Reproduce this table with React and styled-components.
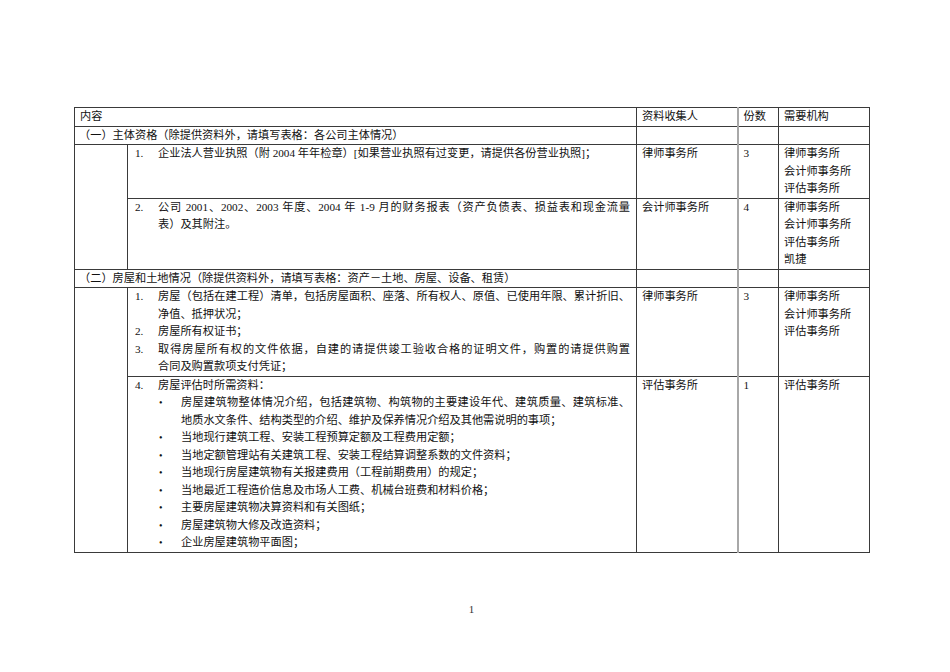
import React from 'react';
import styled, { createGlobalStyle } from 'styled-components';

const GlobalStyle = createGlobalStyle`
  html, body {
    margin: 0;
    padding: 0;
    background: #fff;
  }
  body {
    font-family: 'Liberation Serif', 'Noto Sans CJK SC', serif;
    color: #111;
  }
`;

const Page = styled.main`
  width: 950px;
  height: 672px;
  box-sizing: border-box;
  padding: 107px 0 0 74px;
  display: flex;
  flex-direction: column;
`;

const Table = styled.table`
  width: 795px;
  border-collapse: collapse;
  table-layout: fixed;
  font-size: 11.2px;
  line-height: 17.5px;
`;

const Cell = styled.td`
  border: 1px solid #3a3a3a;
  padding: 0 6px 0 5px;
  vertical-align: top;
  ${p => p.$grey && 'border-left: 2px solid #a8a8a8;'}
`;

const Section = styled.span`
  margin-left: -1px;
`;

const Item = styled.div`
  display: grid;
  grid-template-columns: 23px 1fr;
  padding-left: 2px;
`;

const Num = styled.span`
  font-family: 'Liberation Serif', serif;
`;

const Line = styled.span`
  display: block;
  white-space: nowrap;
  ${p => p.$full && 'text-align: justify; text-align-last: justify;'}
`;

const Bullets = styled.ul`
  list-style: none;
  margin: 0;
  padding: 0;
`;

const Bullet = styled.li`
  display: grid;
  grid-template-columns: 23px 1fr;
  &::before {
    content: '•';
    font-family: 'Liberation Serif', serif;
    font-size: 10px;
    padding-left: 1px;
  }
`;

const Footer = styled.footer`
  width: 795px;
  margin-top: 50px;
  text-align: center;
  font-family: 'Liberation Serif', serif;
  font-size: 11px;
  color: #333;
`;

// each entry is one printed line; every line but the last is set flush to both edges
function Para({ lines }) {
  return (
    <div>
      {lines.map((text, i) => (
        <Line key={i} $full={i < lines.length - 1}>
          {text}
        </Line>
      ))}
    </div>
  );
}

function Agencies({ names }) {
  return (
    <div>
      {names.map(name => (
        <Line key={name}>{name}</Line>
      ))}
    </div>
  );
}

const assetBullets = [
  [
    '房屋建筑物整体情况介绍，包括建筑物、构筑物的主要建设年代、建筑质量、建筑标准、',
    '地质水文条件、结构类型的介绍、维护及保养情况介绍及其他需说明的事项；',
  ],
  ['当地现行建筑工程、安装工程预算定额及工程费用定额；'],
  ['当地定额管理站有关建筑工程、安装工程结算调整系数的文件资料；'],
  ['当地现行房屋建筑物有关报建费用（工程前期费用）的规定；'],
  ['当地最近工程造价信息及市场人工费、机械台班费和材料价格；'],
  ['主要房屋建筑物决算资料和有关图纸；'],
  ['房屋建筑物大修及改造资料；'],
  ['企业房屋建筑物平面图；'],
];

export default function App() {
  return (
    <Page>
      <GlobalStyle />
      <Table>
        <colgroup>
          <col style={{ width: 53 }} />
          <col style={{ width: 509 }} />
          <col style={{ width: 101 }} />
          <col style={{ width: 41 }} />
          <col style={{ width: 91 }} />
        </colgroup>
        <tbody>
          <tr>
            <Cell colSpan={2}>内容</Cell>
            <Cell>资料收集人</Cell>
            <Cell $grey>份数</Cell>
            <Cell>需要机构</Cell>
          </tr>
          <tr>
            <Cell colSpan={2}>
              <Section>（一）主体资格（除提供资料外，请填写表格：各公司主体情况）</Section>
            </Cell>
            <Cell />
            <Cell $grey />
            <Cell />
          </tr>
          <tr>
            <Cell rowSpan={2} />
            <Cell>
              <Item>
                <Num>1.</Num>
                <Para lines={['企业法人营业执照（附 2004 年年检章）[如果营业执照有过变更，请提供各份营业执照]；']} />
              </Item>
            </Cell>
            <Cell>律师事务所</Cell>
            <Cell $grey>3</Cell>
            <Cell>
              <Agencies names={['律师事务所', '会计师事务所', '评估事务所']} />
            </Cell>
          </tr>
          <tr>
            <Cell>
              <Item>
                <Num>2.</Num>
                <Para
                  lines={[
                    '公司 2001、2002、2003 年度、2004 年 1-9 月的财务报表（资产负债表、损益表和现金流量',
                    '表）及其附注。',
                  ]}
                />
              </Item>
            </Cell>
            <Cell>会计师事务所</Cell>
            <Cell $grey>4</Cell>
            <Cell>
              <Agencies names={['律师事务所', '会计师事务所', '评估事务所', '凯捷']} />
            </Cell>
          </tr>
          <tr>
            <Cell colSpan={2}>
              <Section>（二）房屋和土地情况（除提供资料外，请填写表格：资产－土地、房屋、设备、租赁）</Section>
            </Cell>
            <Cell />
            <Cell $grey />
            <Cell />
          </tr>
          <tr>
            <Cell rowSpan={2} />
            <Cell>
              <Item>
                <Num>1.</Num>
                <Para
                  lines={[
                    '房屋（包括在建工程）清单，包括房屋面积、座落、所有权人、原值、已使用年限、累计折旧、',
                    '净值、抵押状况；',
                  ]}
                />
              </Item>
              <Item>
                <Num>2.</Num>
                <Para lines={['房屋所有权证书；']} />
              </Item>
              <Item>
                <Num>3.</Num>
                <Para
                  lines={[
                    '取得房屋所有权的文件依据，自建的请提供竣工验收合格的证明文件，购置的请提供购置',
                    '合同及购置款项支付凭证；',
                  ]}
                />
              </Item>
            </Cell>
            <Cell>律师事务所</Cell>
            <Cell $grey>3</Cell>
            <Cell>
              <Agencies names={['律师事务所', '会计师事务所', '评估事务所']} />
            </Cell>
          </tr>
          <tr>
            <Cell>
              <Item>
                <Num>4.</Num>
                <div>
                  <Para lines={['房屋评估时所需资料：']} />
                  <Bullets>
                    {assetBullets.map(lines => (
                      <Bullet key={lines[0]}>
                        <Para lines={lines} />
                      </Bullet>
                    ))}
                  </Bullets>
                </div>
              </Item>
            </Cell>
            <Cell>评估事务所</Cell>
            <Cell $grey>1</Cell>
            <Cell>评估事务所</Cell>
          </tr>
        </tbody>
      </Table>
      <Footer>1</Footer>
    </Page>
  );
}
